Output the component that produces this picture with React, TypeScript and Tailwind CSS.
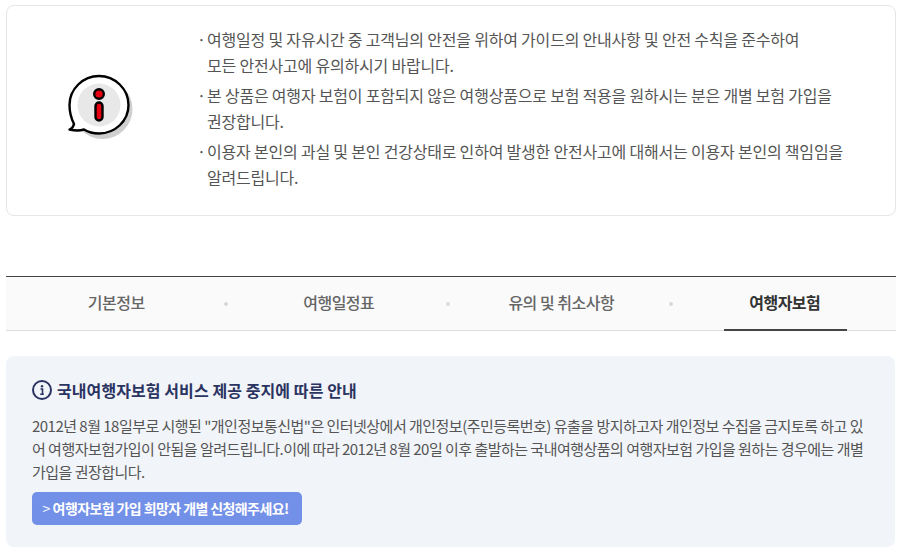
import React from "react";

const font = { fontFamily: '"Noto Sans CJK KR", "Noto Sans", sans-serif' };

function BubbleIcon() {
  return (
    <svg width="66" height="66" viewBox="0 0 66 66" fill="none">
      <circle cx="34.500" cy="35" r="30" fill="#cfcfcf" />
      <path d="M6 50 C3 44 1.500 38 1.500 31 C1.500 15 15 2 31 2 C47 2 60.500 15 60.500 31 C60.500 47 47 59.500 31 59.500 C25 59.500 20 58 16 55.500 C11 57 6 56.500 1.500 55.500 C4 54.500 5.500 52.500 6 50 Z" fill="#fff" stroke="#000" strokeWidth="2.400" strokeLinejoin="round" />
      <circle cx="31" cy="31" r="21.500" fill="#e8e8e8" />
      <circle cx="31" cy="20" r="4.800" fill="#e60012" stroke="#000" strokeWidth="2.400" />
      <rect x="27.500" y="28.500" width="7" height="18" rx="3.500" fill="#e60012" stroke="#000" strokeWidth="2.400" />
    </svg>
  );
}

function InfoIcon() {
  return (
    <svg width="20" height="20" viewBox="0 0 20 20" fill="none">
      <circle cx="10" cy="10" r="9" stroke="#2b3361" strokeWidth="2" />
      <circle cx="10" cy="6.200" r="1.200" fill="#2b3361" />
      <path d="M8.500 9h2v5M8.200 14.300h3.600" stroke="#2b3361" strokeWidth="1.600" />
    </svg>
  );
}

const notes = [
  ["여행일정 및 자유시간 중 고객님의 안전을 위하여 가이드의 안내사항 및 안전 수칙을 준수하여", "모든 안전사고에 유의하시기 바랍니다."],
  ["본 상품은 여행자 보험이 포함되지 않은 여행상품으로 보험 적용을 원하시는 분은 개별 보험 가입을", "권장합니다."],
  ["이용자 본인의 과실 및 본인 건강상태로 인하여 발생한 안전사고에 대해서는 이용자 본인의 책임임을", "알려드립니다."],
];

const tabs = ["기본정보", "여행일정표", "유의 및 취소사항", "여행자보험"];

export default function App() {
  return (
    <div className="w-[899px] h-[555px] overflow-hidden bg-white pt-[5px] pl-[6px] pr-[3px]" style={font}>
      <section className="h-[211px] border border-[#e6e6e6] rounded-lg flex items-center">
        <div className="w-[192px] shrink-0 pl-[61px] -mt-[7px]">
          <BubbleIcon />
        </div>
        <div className="text-[16px] leading-[26px] text-[#555] tracking-[-0.2px] -mt-[5px]">
          {notes.map((n, i) => (
            <div key={i} className={i ? "mt-[4px]" : ""}>
              <p className="whitespace-nowrap"><span className="inline-block w-[8px] -ml-[2px] mr-[2px]">·</span>{n[0]}</p>
              <p className="pl-[8px] whitespace-nowrap">{n[1]}</p>
            </div>
          ))}
        </div>
      </section>

      <nav className="mt-[60px] h-[55px] border-t border-b border-t-[#444] border-b-[#ddd] bg-[#fafafa] grid grid-cols-4">
        {tabs.map((t, i) => (
          <div key={t} className={`relative flex items-center justify-center pb-[3px] ${i < 3 ? "pr-[2px]" : ""}`}>
            <span className={`text-[16px] tracking-[-0.5px] ${i === 3 ? "font-bold text-[#333]" : "font-medium text-[#666]"}`}>{t}</span>
            {i < 3 && <span className="absolute right-[1px] top-[25px] w-[4px] h-[4px] rounded-full bg-[#d8d8d8]" />}
            {i === 3 && <span className="absolute left-[50px] bottom-[-1px] w-[123px] h-[2px] bg-[#444]" />}
          </div>
        ))}
      </nav>

      <section className="mt-[25px] h-[191px] w-[889px] rounded-lg bg-[#f1f4f9] pt-[24px] px-[26px]">
        <h3 className="flex items-center gap-[5px] text-[16px] leading-[22px] font-bold tracking-[0.08px] text-[#2b3361] -mt-px">
          <InfoIcon />
          국내여행자보험 서비스 제공 중지에 따른 안내
        </h3>
        <p className="mt-[13px] text-[15px] leading-[23px] tracking-[-0.52px] text-[#555]">
          2012년 8월 18일부로 시행된 "개인정보통신법"은 인터넷상에서 개인정보(주민등록번호) 유출을 방지하고자 개인정보 수집을 금지토록 하고 있어 여행자보험가입이 안됨을 알려드립니다.이에 따라 2012년 8월 20일 이후 출발하는 국내여행상품의 여행자보험 가입을 원하는 경우에는 개별 가입을 권장합니다.
        </p>
        <button className="mt-[9px] w-[270px] h-[33px] rounded-[5px] bg-[#7390e8] text-white text-[14px] tracking-[-0.6px] font-bold flex items-center justify-center pr-[3px]">
          <span className="font-normal mr-[3px]">&gt;</span> 여행자보험 가입 희망자 개별 신청해주세요!
        </button>
      </section>
    </div>
  );
}
